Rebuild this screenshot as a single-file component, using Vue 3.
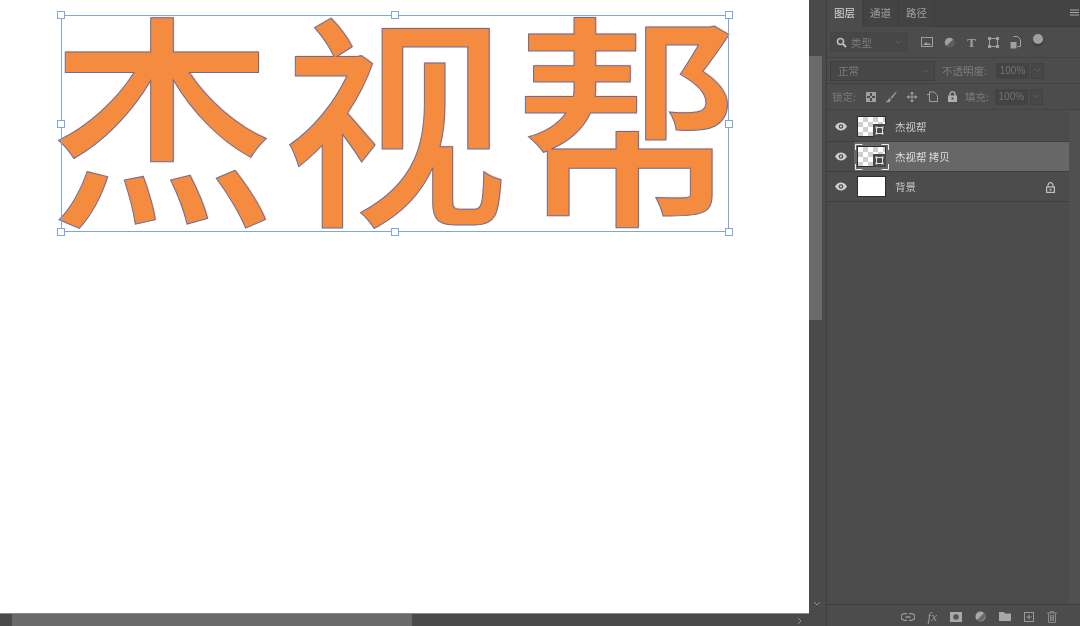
<script setup>
const layers = [
  { name: '杰视帮', kind: 'smart' },
  { name: '杰视帮 拷贝', kind: 'smart', active: true },
  { name: '背景', kind: 'bg', locked: true },
]
const glyphs = ['杰', '视', '帮']
const handles = [
  ['0%', '0%'], ['50%', '0%'], ['100%', '0%'],
  ['0%', '50%'], ['100%', '50%'],
  ['0%', '100%'], ['50%', '100%'], ['100%', '100%'],
]
</script>

<template>
  <div class="app">
    <main class="workspace">
      <div class="canvas-row">
        <div class="canvas">
          <div class="transform">
            <div class="word">
              <span v-for="g in glyphs" :key="g" class="glyph">{{ g }}</span>
            </div>
            <i v-for="(h, i) in handles" :key="i" class="handle" :style="{ left: h[0], top: h[1] }"></i>
          </div>
        </div>
        <div class="vscroll">
          <div class="vthumb"></div>
          <svg class="varrow" width="8" height="6" viewBox="0 0 8 6"><path d="M1 1l3 3 3-3" fill="none" stroke="#8f8f8f" stroke-width="1"/></svg>
        </div>
      </div>
      <div class="hrow">
        <div class="hscroll">
          <div class="hthumb"></div>
          <svg class="harrow" width="6" height="8" viewBox="0 0 6 8"><path d="M1 1l3 3-3 3" fill="none" stroke="#8f8f8f" stroke-width="1"/></svg>
        </div>
        <div class="corner"></div>
      </div>
    </main>

    <aside class="panel">
      <div class="tabs">
        <div class="tab on">图层</div>
        <div class="tab">通道</div>
        <div class="tab">路径</div>
        <div class="tabfill">
          <svg width="9" height="7" viewBox="0 0 9 7"><path d="M0 1h9M0 3.500h9M0 6h9" stroke="#a8a8a8" stroke-width="1.200"/></svg>
        </div>
      </div>

      <div class="filter-row">
        <div class="field filter">
          <svg width="11" height="11" viewBox="0 0 11 11"><circle cx="4.500" cy="4.500" r="3" fill="none" stroke="#bdbdbd" stroke-width="1.600"/><path d="M7 7l3 3" stroke="#bdbdbd" stroke-width="2"/></svg>
          <span class="dim">类型</span>
          <svg class="caret" width="7" height="5" viewBox="0 0 7 5"><path d="M1 1l2.500 2.500L6 1" fill="none" stroke="#626262"/></svg>
        </div>
        <div class="filter-icons">
          <svg width="12" height="10" viewBox="0 0 12 10"><rect x=".5" y=".5" width="11" height="9" fill="none" stroke="#a0a0a0"/><path d="M2 8l3-3 2 2 1-1 2 2z" fill="#a0a0a0"/></svg>
          <svg width="11" height="11" viewBox="0 0 11 11"><circle cx="5.500" cy="5.500" r="4.700" fill="#a0a0a0"/><path d="M9 2.400A4.700 4.700 0 0 1 2.400 9z" fill="#5c5c5c"/></svg>
          <span class="t-icon">T</span>
          <svg width="11" height="11" viewBox="0 0 11 11"><rect x="1.500" y="1.500" width="8" height="8" fill="none" stroke="#a0a0a0"/><path d="M0 0h3v3H0zM8 0h3v3H8zM0 8h3v3H0zM8 8h3v3H8z" fill="#a0a0a0"/></svg>
          <svg width="11" height="13" viewBox="0 0 11 13"><path d="M3.500.5h4l3 3v7h-3" fill="none" stroke="#a0a0a0"/><rect x=".5" y="6" width="6" height="6.500" fill="#a0a0a0"/></svg>
          <span class="toggle"></span>
        </div>
      </div>

      <div class="opt-row blend">
        <div class="field mode"><span class="dim">正常</span>
          <svg class="caret" width="7" height="5" viewBox="0 0 7 5"><path d="M1 1l2.500 2.500L6 1" fill="none" stroke="#626262"/></svg>
        </div>
        <span class="dim label">不透明度:</span>
        <div class="pct">100%</div>
        <div class="stepper"><svg width="7" height="5" viewBox="0 0 7 5"><path d="M1 1l2.500 2.500L6 1" fill="none" stroke="#626262"/></svg></div>
      </div>

      <div class="opt-row lock">
        <span class="dim">锁定:</span>
        <div class="lock-icons">
          <svg width="10" height="10" viewBox="0 0 10 10"><rect x=".5" y=".5" width="9" height="9" fill="#4c4c4c" stroke="#a0a0a0"/><path d="M1 1h3v3H1zM6 1h3v3H6zM4 4h2v2H4zM1 6h3v3H1zM6 6h3v3H6z" fill="#a0a0a0"/></svg>
          <svg width="12" height="12" viewBox="0 0 12 12"><path d="M11 .8L5.600 6.600l1.200 1.200L11.600 1.400zM4.600 7.200C2.800 7.600 3.400 10 .6 11c2.600.8 5.200-.2 5.200-2.600z" fill="#a0a0a0"/></svg>
          <svg width="12" height="12" viewBox="0 0 12 12"><path d="M6 .5L8 3H4zM6 11.500L4 9h4zM.5 6L3 4v4zM11.500 6L9 8V4z" fill="#a0a0a0"/><path d="M6 2v8M2 6h8" stroke="#a0a0a0"/></svg>
          <svg width="12" height="11" viewBox="0 0 12 11"><path d="M2.500 1v9.500H11M2.500 1H7l3.500 3.500v6" fill="none" stroke="#a0a0a0"/><path d="M0 3.500h2.500" stroke="#a0a0a0"/></svg>
          <svg width="9" height="11" viewBox="0 0 9 11"><path d="M2 5V3.200a2.500 2.500 0 0 1 5 0V5" fill="none" stroke="#b0b0b0" stroke-width="1.300"/><rect y="4.500" width="9" height="6.500" fill="#b0b0b0"/><rect x="3.500" y="6.500" width="2" height="2" fill="#4c4c4c"/></svg>
        </div>
        <span class="dim label fill">填充:</span>
        <div class="pct">100%</div>
        <div class="stepper"><svg width="7" height="5" viewBox="0 0 7 5"><path d="M1 1l2.500 2.500L6 1" fill="none" stroke="#626262"/></svg></div>
      </div>

      <div class="list">
        <div class="rows">
          <div v-for="l in layers" :key="l.name" class="row" :class="{ active: l.active }">
            <div class="eye">
              <svg width="12" height="9" viewBox="0 0 12 9"><path d="M0 4.500C2 1.300 4 .5 6 .5s4 .8 6 4c-2 3.200-4 4-6 4s-4-.8-6-4z" fill="#cfcfcf"/><circle cx="6" cy="4.500" r="2.300" fill="#4c4c4c"/><circle cx="6" cy="4.500" r="1.100" fill="#cfcfcf"/></svg>
            </div>
            <div class="thumb" :class="l.kind">
              <svg v-if="l.kind === 'smart'" class="badge" width="13" height="13" viewBox="0 0 13 13"><rect width="13" height="13" fill="#484848"/><rect x="3.500" y="3.500" width="6" height="6" fill="none" stroke="#dedede"/><path d="M2.500 2.500h2v2h-2zM8.500 2.500h2v2h-2zM2.500 8.500h2v2h-2zM8.500 8.500h2v2h-2z" fill="#dedede"/></svg>
              <svg v-if="l.active" class="brackets" width="34" height="26" viewBox="0 0 34 26"><path d="M.5 6V.5h7M26.500.5h7V6M.5 20v5.500h7M26.500 25.500h7V20" fill="none" stroke="#ececec"/></svg>
            </div>
            <span class="lname">{{ l.name }}</span>
            <svg v-if="l.locked" class="row-lock" width="9" height="11" viewBox="0 0 9 11"><path d="M2 5V3.200a2.500 2.500 0 0 1 5 0V5" fill="none" stroke="#c0c0c0" stroke-width="1.200"/><rect x=".6" y="5" width="7.800" height="5.400" fill="none" stroke="#c0c0c0" stroke-width="1.200"/><rect x="3.600" y="6.800" width="1.800" height="1.800" fill="#c0c0c0"/></svg>
          </div>
        </div>
      </div>

      <div class="footer">
        <svg width="14" height="8" viewBox="0 0 14 8"><path d="M6 .7H3.500a3.300 3.300 0 0 0 0 6.600H6M8 .7h2.500a3.300 3.300 0 0 1 0 6.600H8M4.500 4h5" fill="none" stroke="#999" stroke-width="1.300"/></svg>
        <span class="fx">fx</span>
        <svg width="12" height="10" viewBox="0 0 12 10"><rect width="12" height="10" fill="#a8a8a8"/><circle cx="6" cy="5" r="2.800" fill="#555"/></svg>
        <svg width="11" height="11" viewBox="0 0 11 11"><circle cx="5.500" cy="5.500" r="5" fill="#a8a8a8"/><path d="M9 2L2 9a5 5 0 0 0 7-7z" fill="#686868"/></svg>
        <svg width="12" height="9" viewBox="0 0 12 9"><path d="M0 0h5l1 1.500h6V9H0z" fill="#a8a8a8"/></svg>
        <svg width="10" height="10" viewBox="0 0 10 10"><rect x=".5" y=".5" width="9" height="9" fill="none" stroke="#999"/><path d="M5 2.500v5M2.500 5h5" stroke="#999"/></svg>
        <svg width="10" height="12" viewBox="0 0 10 12"><path d="M0 2h10M3.500 2V.5h3V2M1.500 2.500v9h7v-9M3.500 4v6M5 4v6M6.500 4v6" fill="none" stroke="#8c8c8c"/></svg>
      </div>
    </aside>
  </div>
</template>

<style scoped>
.app {
  width: 1080px;
  height: 626px;
  display: flex;
  overflow: hidden;
  background: #fff;
  font-family: "Noto Sans CJK SC", "Noto Sans", sans-serif;
}
.workspace {
  width: 826px;
  display: flex;
  flex-direction: column;
  flex: none;
}
.canvas-row { flex: 1; display: flex; min-height: 0; }
.canvas {
  width: 809px;
  flex: none;
  box-sizing: border-box;
  background: #fff;
  padding: 15px 0 0 61px;
}
.vscroll {
  flex: 1;
  background: #4a4a4a;
  padding-top: 56px;
  position: relative;
  box-sizing: border-box;
}
.vthumb { width: 13px; height: 264px; background: #6a6a6a; }
.varrow { position: absolute; left: 4px; bottom: 6px; }
.transform {
  position: relative;
  display: flow-root;
  width: 668px;
  height: 217px;
  outline: 1px solid #7ea6e0;
  outline-offset: -1px;
}
.word {
  display: flex;
  gap: 7px;
  height: 230px;
  margin: -19px 0 0 -12px;
  width: 700px;
}
.glyph {
  width: 226px;
  flex: none;
  text-align: center;
  font-size: 226px;
  line-height: 230px;
  font-weight: 500;
  color: #f58b3e;
  -webkit-text-stroke: 1px #6d6c98;
  text-shadow: 1px -1px 1px #fbd8bf;
}
.handle {
  position: absolute;
  width: 8px;
  height: 8px;
  margin: -4px 0 0 -4px;
  background: #fff;
  border: 1px solid #7ea6e0;
  box-sizing: border-box;
}
.hrow { height: 13px; flex: none; display: flex; }
.hscroll {
  width: 809px;
  flex: none;
  background: #4a4a4a;
  border-top: 1px solid #8a8a8a;
  box-sizing: border-box;
  display: flex;
  padding-left: 12px;
  position: relative;
}
.corner { flex: 1; background: #4a4a4a; }
.hthumb { width: 400px; height: 12px; background: #6a6a6a; }
.harrow { position: absolute; right: 6px; top: 3px; }

.panel {
  flex: 1;
  min-width: 0;
  background: #4c4c4c;
  display: flex;
  flex-direction: column;
  color: #c8c8c8;
  font-size: 10.500px;
  border-left: 1px solid #3e3e3e;
  box-sizing: border-box;
  filter: blur(0.35px);
}
.tabs {
  height: 27px;
  flex: none;
  display: flex;
  background: #434343;
  box-sizing: border-box;
}
.tab {
  width: 36px;
  line-height: 25px;
  text-align: center;
  border-right: 1px solid #3d3d3d;
  box-sizing: border-box;
  color: #a0a0a0;
}
.tab.on { background: #4c4c4c; color: #d8d8d8; }
.tabfill {
  flex: 1;
  display: flex;
  justify-content: flex-end;
  align-items: center;
  padding: 0 1px 2px 0;
  border-bottom: 1px solid #3a3a3a;
}
.filter-row {
  height: 31px;
  flex: none;
  display: flex;
  align-items: center;
  padding-left: 3px;
  border-bottom: 1px solid #424242;
  box-sizing: border-box;
}
.field {
  height: 20px;
  display: flex;
  align-items: center;
  background: #474747;
  border: 1px solid #454545;
  box-sizing: border-box;
  padding: 0 5px;
  position: relative;
}
.filter { width: 78px; gap: 4px; }
.caret { position: absolute; right: 5px; top: 7px; }
.dim { color: #7c7c7c; }
.filter-icons { display: flex; align-items: center; gap: 11px; margin-left: 13px; }
.t-icon { font: bold 13px/13px "Liberation Serif", serif; color: #a0a0a0; width: 11px; text-align: center; }
.toggle {
  width: 10px;
  height: 10px;
  border-radius: 50%;
  background: #a0a0a0;
  box-shadow: 0 2px 2px #3a3a3a;
  margin: -6px 0 0 1px;
}
.opt-row {
  height: 26px;
  flex: none;
  display: flex;
  align-items: center;
  box-sizing: border-box;
  border-bottom: 1px solid #424242;
  padding-left: 3px;
}
.mode { width: 105px; padding-left: 7px; border-color: #3f3f3f; }
.label { margin-left: 7px; width: 54px; white-space: nowrap; }
.pct {
  width: 33px;
  height: 16px;
  line-height: 16px;
  background: #434343;
  color: #737373;
  text-align: center;
  font-size: 10px;
  font-family: "Liberation Sans", sans-serif;
  flex: none;
}
.stepper {
  width: 13px;
  height: 16px;
  background: #474747;
  border: 1px solid #424242;
  box-sizing: border-box;
  display: flex;
  align-items: center;
  justify-content: center;
  margin-left: 2px;
  flex: none;
}
.lock { padding-left: 5px; }
.lock-icons { display: flex; align-items: center; gap: 9px; margin-left: 10px; }
.label.fill { width: auto; margin: 0 6px 0 8px; }
.list { flex: 1; min-height: 0; padding-top: 2px; border-right: 11px solid #505050; }
.row {
  height: 30px;
  display: flex;
  align-items: center;
  box-sizing: border-box;
  border-bottom: 1px solid #3f3f3f;
  position: relative;
}
.row.active { background: #676767; color: #dcdcdc; }
.eye {
  width: 27px;
  flex: none;
  align-self: stretch;
  display: flex;
  align-items: center;
  justify-content: center;
  background: #4c4c4c;
  box-sizing: border-box;
}
.thumb {
  width: 27px;
  height: 19px;
  flex: none;
  position: relative;
  margin: 0 9px 0 3px;
  border: 1px solid #2d2d2d;
  background-color: #fff;
}
.thumb.smart {
  background-image: conic-gradient(#cfcfcf 25%, #fff 0 50%, #cfcfcf 0 75%, #fff 0);
  background-size: 10px 10px;
}
.badge { position: absolute; right: -1px; bottom: -1px; }
.brackets { position: absolute; left: -3px; top: -3px; }
.lname { white-space: nowrap; }
.row-lock { position: absolute; right: 14px; top: 10px; }
.footer {
  height: 22px;
  flex: none;
  background: #4c4c4c;
  border-top: 1px solid #3f3f3f;
  display: flex;
  align-items: center;
  justify-content: flex-end;
  gap: 13px;
  padding: 2px 23px 0 0;
  box-sizing: border-box;
}
.fx { font: italic 13px/13px "Liberation Serif", serif; color: #999; }
</style>
